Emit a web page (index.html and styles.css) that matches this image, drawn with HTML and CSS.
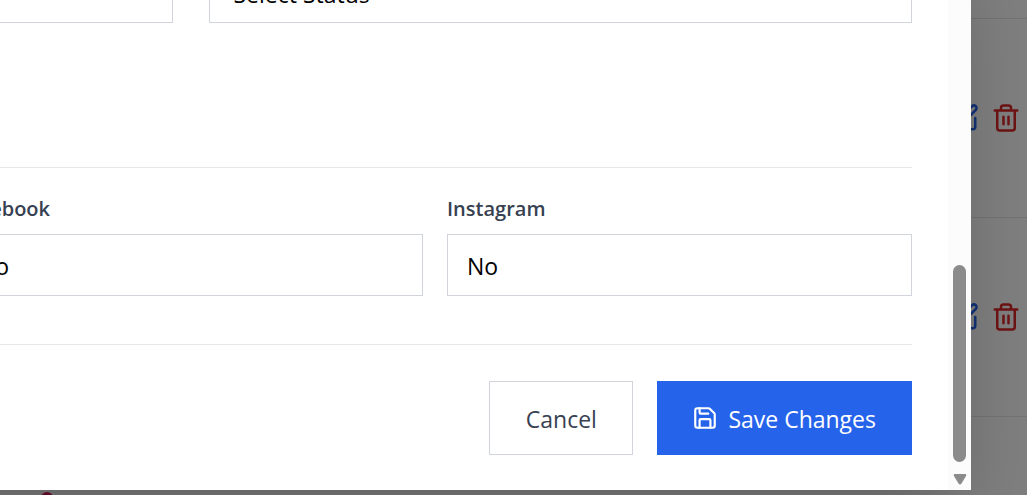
FILE: index.html
```html
<!DOCTYPE html>
<html lang="en">
<head>
<meta charset="utf-8">
<title>Edit record</title>
<link rel="stylesheet" href="styles.css">
</head>
<body>
<svg class="symbols" aria-hidden="true">
  <symbol id="edit" viewBox="0 0 24 24"><path d="M12 3H5a2 2 0 0 0-2 2v14a2 2 0 0 0 2 2h14a2 2 0 0 0 2-2v-7"/><path d="M18.4 2.6a2.1 2.1 0 0 1 3 3L12 15l-4 1 1-4Z"/></symbol>
  <symbol id="trash" viewBox="0 0 24 24"><path d="M3 6h18M19 6v14a2 2 0 0 1-2 2H7a2 2 0 0 1-2-2V6M8 6V4a2 2 0 0 1 2-2h4a2 2 0 0 1 2 2v2M10 11v6M14 11v6"/></symbol>
</svg>
<main class="list">
  <div class="row row-first"></div>
  <div class="row">
    <button class="icon-button edit" aria-label="Edit"><svg><use href="#edit"/></svg></button>
    <button class="icon-button delete" aria-label="Delete"><svg><use href="#trash"/></svg></button>
  </div>
  <div class="row">
    <button class="icon-button edit" aria-label="Edit"><svg><use href="#edit"/></svg></button>
    <button class="icon-button delete" aria-label="Delete"><svg><use href="#trash"/></svg></button>
  </div>
  <div class="row row-last"><span class="dot"></span></div>
</main>
<div class="backdrop"></div>
<section class="modal" role="dialog" aria-label="Edit record">
  <form class="form">
    <div class="pair">
      <input class="control" type="text" aria-label="Details">
      <select class="control status" aria-label="Status"><option>Select Status</option></select>
    </div>
    <div class="social">
      <div class="field facebook">
        <label for="facebook">Facebook</label>
        <select class="control" id="facebook"><option>No</option><option>Yes</option></select>
      </div>
      <div class="field">
        <label for="instagram">Instagram</label>
        <select class="control" id="instagram"><option>No</option><option>Yes</option></select>
      </div>
    </div>
    <div class="actions">
      <button class="button cancel" type="button">Cancel</button>
      <button class="button save" type="button">
        <svg viewBox="0 0 24 24"><path d="M15.2 3a2 2 0 0 1 1.4.6l3.8 3.8a2 2 0 0 1 .6 1.4V19a2 2 0 0 1-2 2H5a2 2 0 0 1-2-2V5a2 2 0 0 1 2-2z"/><path d="M17 21v-7a1 1 0 0 0-1-1H8a1 1 0 0 0-1 1v7M7 3v4a1 1 0 0 0 1 1h7"/></svg>
        <span>Save Changes</span>
      </button>
    </div>
  </form>
  <div class="scrollbar">
    <div class="thumb"></div>
    <svg class="arrow" viewBox="0 0 14 12"><path d="M2 1h10q2 0 1 2L8.500 10.500q-1.500 2-3 0L1 3Q0 1 2 1Z"/></svg>
  </div>
</section>
</body>
</html>
```

FILE: styles.css
```css
* { box-sizing: border-box; }

body {
  margin: 0;
  height: 100vh;
  position: relative;
  overflow: hidden;
  background: #fff;
  font-family: "Segoe UI", "Open Sans", "Noto Sans", sans-serif;
}

svg {
  fill: none;
  stroke: currentColor;
  stroke-width: 2;
  stroke-linecap: round;
  stroke-linejoin: round;
}

.symbols { position: absolute; width: 0; height: 0; }

.list {
  display: flex;
  flex-direction: column;
  height: 100%;
  overflow: hidden;
}

.row {
  display: flex;
  flex: none;
  justify-content: flex-end;
  align-items: center;
  gap: 12px;
  height: 199px;
  padding-right: 6px;
  border-bottom: 1px solid #e5e7eb;
}

.row-first { height: 19px; }

.row-last {
  flex: 1;
  justify-content: flex-start;
  align-items: flex-start;
  padding: 75px 0 0 41px;
  border: 0;
  overflow: hidden;
}

.dot {
  width: 12px;
  height: 12px;
  border-radius: 50%;
  background: #db1658;
}

.icon-button {
  display: flex;
  padding: 0;
  border: 0;
  background: none;
}

.icon-button svg { width: 30px; height: 30px; }
.edit { color: #2563eb; }
.delete { color: #dc2626; }

.backdrop {
  position: absolute;
  inset: 0;
  background: rgba(0, 0, 0, 0.5);
}

.modal {
  position: absolute;
  top: -75px;
  left: -567px;
  right: 56px;
  display: flex;
  background: #fff;
  box-shadow: 0 38px 75px -18px rgba(0, 0, 0, 0.25);
}

.form {
  flex: 1;
  padding: 36px 36px 35px;
}

.pair {
  display: grid;
  grid-template-columns: 1fr 1fr;
  gap: 36px;
  padding-bottom: 144px;
}

.control {
  width: 100%;
  height: 62px;
  padding: 2px 19px 0;
  border: 1px solid #d1d5db;
  border-radius: 0;
  background: #fff;
  color: #000;
  font-family: inherit;
  font-size: 23px;
  appearance: none;
}

.status { padding: 4px 24px 0; }

.social {
  display: grid;
  grid-template-columns: repeat(3, 1fr);
  gap: 24px;
  padding: 24px 0 48px;
  border-top: 1px solid #e5e7eb;
  border-bottom: 1px solid #e5e7eb;
}

.facebook { grid-column: 2; }

.field label {
  display: block;
  margin-bottom: 9px;
  color: #374151;
  font-size: 20px;
  font-weight: 600;
  line-height: 33px;
}

.field .control { display: block; }

.actions {
  display: flex;
  justify-content: flex-end;
  gap: 24px;
  padding-top: 36px;
}

.button {
  display: flex;
  align-items: center;
  justify-content: center;
  gap: 11px;
  height: 74px;
  padding: 2px 35px 0;
  border: 1px solid #d1d5db;
  font-family: inherit;
  font-size: 23px;
}

.button svg {
  width: 26px;
  height: 26px;
  margin: -3px -1px 0;
}

.cancel {
  min-width: 144px;
  background: #fff;
  color: #374151;
}

.save {
  border-color: #2563eb;
  background: #2563eb;
  color: #fff;
}

.scrollbar {
  display: flex;
  flex-direction: column;
  justify-content: flex-end;
  align-items: center;
  gap: 11px;
  width: 23px;
  padding-bottom: 5px;
  background: #fcfcfc;
}

.thumb {
  width: 13px;
  height: 197px;
  border-radius: 7px;
  background: #8b8b8b;
}

.arrow {
  width: 14px;
  height: 12px;
  fill: #8b8b8b;
  stroke: none;
}
```
